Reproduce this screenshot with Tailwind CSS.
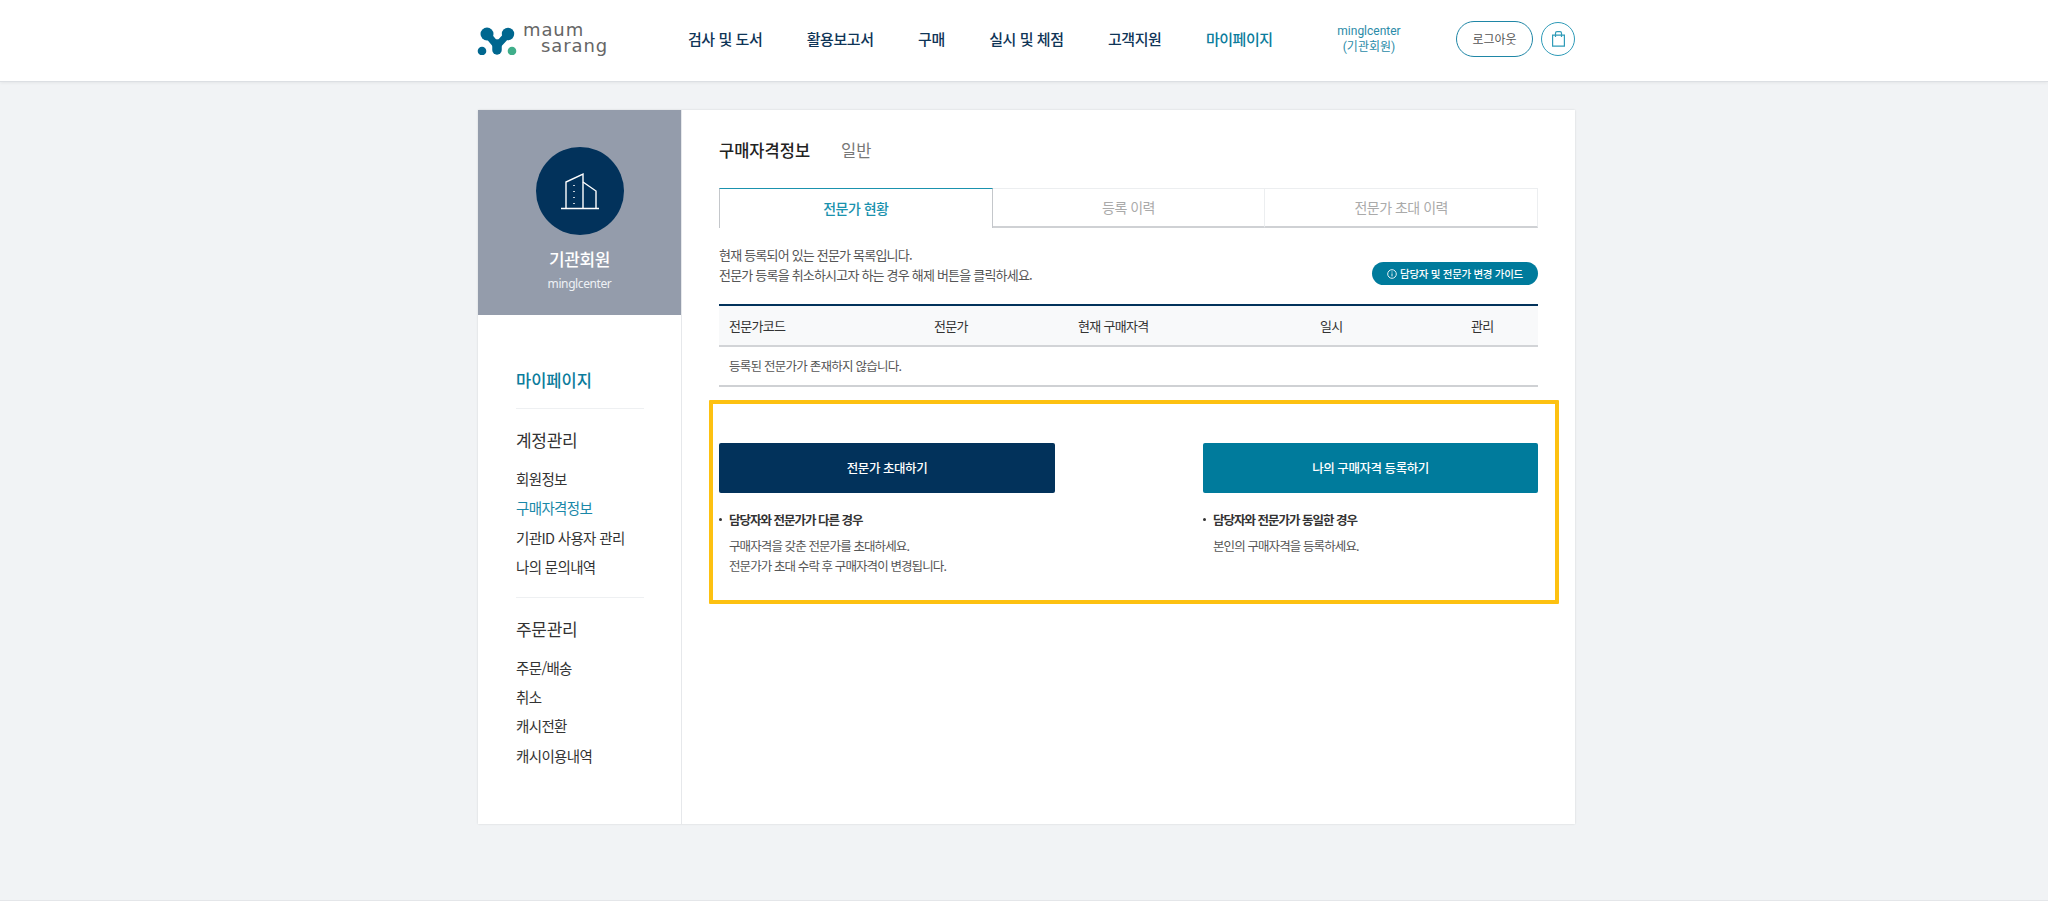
<!doctype html>
<html lang="ko">
<head>
<meta charset="utf-8">
<script src="https://cdn.jsdelivr.net/npm/@tailwindcss/browser@4"></script>
</head>
<body class="bg-[#f1f3f5] font-['Noto_Sans_CJK_KR','Noto_Sans',sans-serif] text-[#333]">
<div class="h-[907px] overflow-hidden flex flex-col">
  <header class="h-[82px] shrink-0 bg-white border-b border-[#dcdfe3] shadow-[0_1px_3px_rgba(0,0,0,0.06)]">
    <div class="w-[1097px] ml-[478px] h-full flex items-center">
      <a class="flex items-center w-[210px] shrink-0">
        <svg width="40" height="28" viewBox="0 0 40 28" class="-ml-[1px]">
          <path d="M10 7 L20 19 L31 7" fill="none" stroke="#00678f" stroke-width="7" stroke-linecap="round" stroke-linejoin="round"/>
          <circle cx="10" cy="7" r="6.5" fill="#00678f"/>
          <circle cx="31" cy="7" r="6.2" fill="#00678f"/>
          <path d="M20 17 V23" stroke="#00678f" stroke-width="9.5" stroke-linecap="round"/>
          <circle cx="5" cy="24" r="4.3" fill="#00678f"/>
          <circle cx="35" cy="24" r="4.3" fill="#3fae8a"/>
        </svg>
        <div class="ml-[6px] pb-[6px] font-['DejaVu_Sans',sans-serif] text-[#666] text-[18px] leading-[16px] tracking-[0.9px]">
          <div>maum</div>
          <div class="ml-[18px]">sarang</div>
        </div>
      </a>
      <nav class="flex items-center gap-[44.5px] pb-[2px] text-[15px] font-medium text-[#0f3557] tracking-[-0.45px]">
        <a>검사 및 도서</a><a>활용보고서</a><a>구매</a><a>실시 및 체점</a><a>고객지원</a><a class="text-[#0b7c9c]">마이페이지</a>
      </nav>
      <div class="ml-auto flex items-center pb-[3px]">
        <div class="w-[100px] mr-[16px] text-center text-[12px] leading-[16px] text-[#2b8ba8] font-['Roboto','Noto_Sans_CJK_KR',sans-serif]">minglcenter<br>(기관회원)</div>
        <button class="ml-[21px] w-[77px] h-[36px] rounded-full border border-[#1f86a6] text-[12px] text-[#555] bg-white">로그아웃</button>
        <button class="ml-[8px] w-[34px] h-[34px] rounded-full border border-[#2f9bb8] flex items-center justify-center">
          <svg width="13" height="16" viewBox="0 0 13 16" fill="none" stroke="#2f9bb8" stroke-width="1.2"><path d="M0.6 4.2h11.8v11h-11.8z"/><path d="M3.5 6V2.2a1.5 1.5 0 0 1 1.5-1.5h3a1.5 1.5 0 0 1 1.5 1.5V6"/></svg>
        </button>
      </div>
    </div>
  </header>

  <main class="ml-[478px] mt-[28px] w-[1097px] h-[714px] shrink-0 flex bg-white shadow-[0_0_2px_rgba(0,0,0,0.12)]">
    <aside class="w-[204px] shrink-0 border-r border-[#e6e8eb]">
      <div class="h-[205px] bg-[#949cab] flex flex-col items-center pt-[37px] text-white">
        <div class="w-[88px] h-[88px] rounded-full bg-[#02325b] flex items-center justify-center">
          <svg width="40" height="40" viewBox="0 0 40 40" fill="none" stroke="#fff" stroke-width="1.4">
            <path d="M1 37.5h38"/><path d="M6 37.5V11L23 3v34.5"/><path d="M23 11l13 9v17.5"/>
            <path d="M14 14v1M14 20v1M14 26v1M14 32v1" stroke-width="1.5"/>
          </svg>
        </div>
        <div class="mt-[11px] text-[17px] leading-[26px] font-medium tracking-[-0.4px]">기관회원</div>
        <div class="mt-[2px] text-[12px] leading-[20px] text-[#eef1f5] tracking-[-0.4px] font-['Noto_Sans',sans-serif]">minglcenter</div>
      </div>
      <div class="pl-[38px] pr-[37px] pt-[52px]">
        <div class="text-[16.5px] leading-[26px] font-medium text-[#0b7c9c] pb-[15px] border-b border-[#eef0f2]">마이페이지</div>
        <div class="pt-[18px] text-[17px] leading-[26px] text-[#333] tracking-[-0.3px]">계정관리</div>
        <ul class="mt-[11px] text-[14.5px] leading-[29.4px] text-[#333] tracking-[-0.65px]">
          <li>회원정보</li><li class="text-[#1a88a8]">구매자격정보</li><li>기관ID 사용자 관리</li><li>나의 문의내역</li>
        </ul>
        <div class="mt-[15px] border-b border-[#eef0f2]"></div>
        <div class="pt-[18px] text-[17px] leading-[26px] text-[#333] tracking-[-0.3px]">주문관리</div>
        <ul class="mt-[11px] text-[14.5px] leading-[29.4px] text-[#333] tracking-[-0.65px]">
          <li>주문/배송</li><li>취소</li><li>캐시전환</li><li>캐시이용내역</li>
        </ul>
      </div>
    </aside>

    <section class="relative flex-1 pl-[37px] pr-[37px]">
      <div class="pt-[27px] h-[78px] flex items-start text-[16.5px] leading-[26px]">
        <span class="font-medium text-[#222]">구매자격정보</span>
        <span class="ml-[31px] text-[#777]">일반</span>
      </div>
      <div class="flex h-[40px] text-[14px] tracking-[-0.5px]">
        <div class="flex-1 pb-[1px] flex items-center justify-center border-t border-t-[#1a92ae] border-l border-r border-[#c4c7cb] text-[#1a92ae] font-medium">전문가 현황</div>
        <div class="flex-1 pb-[1px] flex items-center justify-center border-t border-[#eceef0] border-b-2 border-b-[#cfd1d4] text-[#aaa]">등록 이력</div>
        <div class="flex-1 pb-[1px] flex items-center justify-center border-t border-l border-r border-[#eceef0] border-b-2 border-b-[#cfd1d4] text-[#aaa]">전문가 초대 이력</div>
      </div>
      <div class="mt-[17px] h-[59px] flex justify-between items-start">
        <p class="text-[13px] leading-[20px] text-[#555] tracking-[-0.8px]">현재 등록되어 있는 전문가 목록입니다.<br>전문가 등록을 취소하시고자 하는 경우 해제 버튼을 클릭하세요.</p>
        <a class="mt-[17px] w-[166px] h-[23px] rounded-full bg-[#007b9c] text-white text-[10.5px] font-medium tracking-[-0.3px] flex items-center justify-center gap-[3px]">
          <svg width="10" height="10" viewBox="0 0 10 10" fill="none" stroke="#fff" stroke-width="0.9"><circle cx="5" cy="5" r="4.3"/><path d="M5 4.4v3M5 2.5v1"/></svg>
          담당자 및 전문가 변경 가이드
        </a>
      </div>
      <table class="w-full table-fixed text-[13px] text-[#333] border-t-2 border-[#02325b] tracking-[-0.7px]">
        <thead>
          <tr class="h-[41px] bg-[#f8f9fa] border-b-2 border-[#d2d4d7]">
            <th class="w-[215px] pl-[10px] text-left font-normal">전문가코드</th>
            <th class="w-[144px] text-left font-normal">전문가</th>
            <th class="w-[242px] text-left font-normal">현재 구매자격</th>
            <th class="w-[151px] text-left font-normal">일시</th>
            <th class="text-left font-normal">관리</th>
          </tr>
        </thead>
        <tbody>
          <tr class="h-[40px] border-b-2 border-[#cfd1d4]"><td colspan="5" class="pl-[10px] text-[12.5px] text-[#555] tracking-[-0.75px]">등록된 전문가가 존재하지 않습니다.</td></tr>
        </tbody>
      </table>

      <div class="mt-[56px] flex justify-between">
        <div class="w-[336px]">
          <button class="w-full h-[50px] rounded-[2px] bg-[#02325b] text-white text-[12.5px] font-medium tracking-[-0.45px]">전문가 초대하기</button>
          <div class="mt-[17px] text-[12.5px] leading-[20px] font-bold text-[#333] tracking-[-1px] flex items-center"><span class="w-[3px] h-[3px] mb-[2px] rounded-full bg-[#333] mr-[7px] shrink-0"></span>담당자와 전문가가 다른 경우</div>
          <p class="mt-[6px] pl-[10px] text-[12.5px] leading-[20px] text-[#555] tracking-[-0.9px]">구매자격을 갖춘 전문가를 초대하세요.<br>전문가가 초대 수락 후 구매자격이 변경됩니다.</p>
        </div>
        <div class="w-[335px]">
          <button class="w-full h-[50px] rounded-[2px] bg-[#007b9c] text-white text-[12.5px] font-medium tracking-[-0.45px]">나의 구매자격 등록하기</button>
          <div class="mt-[17px] text-[12.5px] leading-[20px] font-bold text-[#333] tracking-[-1px] flex items-center"><span class="w-[3px] h-[3px] mb-[2px] rounded-full bg-[#333] mr-[7px] shrink-0"></span>담당자와 전문가가 동일한 경우</div>
          <p class="mt-[6px] pl-[10px] text-[12.5px] leading-[20px] text-[#555] tracking-[-0.9px]">본인의 구매자격을 등록하세요.</p>
        </div>
      </div>
      <div class="absolute left-[27px] top-[290px] w-[850px] h-[204px] border-[4px] border-[#fdc111] rounded-[1px] pointer-events-none"></div>
    </section>
  </main>
  <footer class="mt-auto h-[7px] shrink-0 bg-white border-t border-[#e4e6e9]"></footer>
</div>
</body>
</html>
